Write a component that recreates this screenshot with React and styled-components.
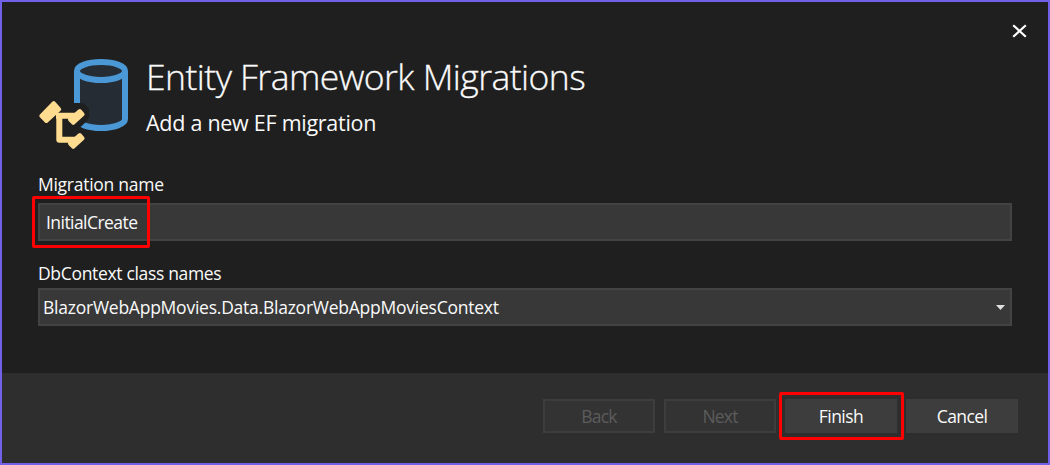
import React from "react";
import styled, { createGlobalStyle } from "styled-components";

const GlobalStyle = createGlobalStyle`
  * { box-sizing: border-box; }
  body { margin: 0; background: #1f1f1f; }
  button, input { font: inherit; }
`;

const Dialog = styled.div`
  position: relative;
  display: flex;
  flex-direction: column;
  width: 1050px;
  height: 465px;
  border: 2px solid #7160e8;
  background: #1f1f1f;
  color: #fafafa;
  font-family: "Segoe UI", "Open Sans", "Noto Sans", sans-serif;
  font-size: 17.5px;
  line-height: 24px;
  white-space: nowrap;
  overflow: hidden;
`;

const CloseButton = styled.button`
  position: absolute;
  top: 16px;
  right: 16px;
  width: 26px;
  height: 26px;
  padding: 0;
  border: 0;
  background: transparent;
  display: grid;
  place-items: center;
`;

const Header = styled.header`
  display: flex;
  gap: 14px;
  padding: 55px 36px 0;
`;

const HeaderIcon = styled.svg`
  width: 94px;
  height: 94px;
  flex: none;
`;

const Title = styled.h1`
  margin: -5px 0 0;
  font-size: 35.5px;
  line-height: 48px;
  font-weight: 300;
  letter-spacing: -0.54px;
  -webkit-text-stroke: 0.3px currentColor;
`;

const Subtitle = styled.p`
  margin: 8px 0 0;
  font-size: 21.5px;
  line-height: 30px;
  letter-spacing: -0.27px;
`;

const Form = styled.main`
  display: flex;
  flex-direction: column;
  gap: 20px;
  padding: 21px 36px 0;
  flex: 1;
`;

const Field = styled.div`
  display: flex;
  flex-direction: column;
  gap: ${(p) => p.$gap};
`;

const Label = styled.label`
  letter-spacing: ${(p) => p.$spacing || 0};
`;

const Control = styled.div`
  position: relative;
  display: flex;
  align-items: center;
  justify-content: space-between;
  height: 38px;
  padding: 0 ${(p) => p.$right || "6px"} 0 ${(p) => p.$left};
  border: 2px solid #434343;
  background: #383838;
`;

const Value = styled.span`
  letter-spacing: ${(p) => p.$spacing || 0};
`;

const Highlight = styled.span`
  position: absolute;
  top: ${(p) => p.$top};
  left: ${(p) => p.$left};
  width: ${(p) => p.$width};
  height: ${(p) => p.$height};
  border: 3px solid #ff0000;
  border-radius: 2px;
  pointer-events: none;
`;

const Footer = styled.footer`
  display: flex;
  justify-content: flex-end;
  align-items: flex-start;
  gap: 9px;
  height: 90px;
  padding: 26px 30px 0 0;
  background: #2e2e2e;
`;

const Button = styled.button`
  position: relative;
  width: 112px;
  height: 34px;
  padding: 0;
  border: 2px solid #3d3d3d;
  background: ${(p) => (p.disabled ? "#333333" : "#3d3d3d")};
  color: ${(p) => (p.disabled ? "#5c5c5c" : "#fafafa")};
  letter-spacing: ${(p) => p.$spacing || 0};
`;

export default function App() {
  return (
    <>
      <GlobalStyle />
      <Dialog role="dialog">
        <CloseButton aria-label="Close">
          <svg width="16" height="14" viewBox="0 0 16 14">
            <path d="M2.2 1.2L14.8 12.8M14.8 1.2L2.2 12.8" stroke="#fff" strokeWidth="2.2" />
          </svg>
        </CloseButton>
        <Header>
          <HeaderIcon viewBox="0 0 94 94">
            <path d="M39 14V62A24 9 0 0 0 87 62V14Z" fill="#252c33" />
            <path d="M39 14V62A24 9 0 0 0 87 62V14" fill="none" stroke="#4b98d6" strokeWidth="6" />
            <ellipse cx="63" cy="14" rx="24" ry="9" fill="#252c33" stroke="#4b98d6" strokeWidth="6" />
            <path d="M34 46H45L51 51.5L51.5 59L49 64L42.5 70L41 76H30Z" fill="#1f1f1f" />
            <path d="M18 58.8H38M21.3 58.8V82.8H38" fill="none" stroke="#ffdc90" strokeWidth="6" strokeLinejoin="round" />
            <g fill="#ffdc90" stroke="#ffdc90" strokeWidth="4" strokeLinejoin="round">
              <path d="M3.3 58.8L15.7 46.2L21.2 52.3L8.4 64Z" />
              <path d="M32 62.5L41.8 54L44.6 57.2L35.3 65.8Z" />
              <path d="M32 86.5L41.8 78L44.6 81.2L35.3 89.8Z" />
            </g>
          </HeaderIcon>
          <div>
            <Title>Entity Framework Migrations</Title>
            <Subtitle>Add a new EF migration</Subtitle>
          </div>
        </Header>
        <Form>
          <Field $gap="7px">
            <Label $spacing="-0.27px">Migration name</Label>
            <Control $left="6px">
              <Value $spacing="-0.55px">InitialCreate</Value>
              <Highlight $top="-9px" $left="-8px" $width="118px" $height="52px" />
            </Control>
          </Field>
          <Field $gap="3px">
            <Label $spacing="-0.33px">DbContext class names</Label>
            <Control $left="3px" $right="5px">
              <Value $spacing="-0.24px">BlazorWebAppMovies.Data.BlazorWebAppMoviesContext</Value>
              <svg width="9" height="5" viewBox="0 0 9 5">
                <path d="M0 0H9L4.5 5Z" fill="#e0e0e0" />
              </svg>
            </Control>
          </Field>
        </Form>
        <Footer>
          <Button disabled $spacing="-0.8px">Back</Button>
          <Button disabled $spacing="-0.8px">Next</Button>
          <Button $spacing="-0.55px">
            Finish
            <Highlight $top="-9px" $left="-8px" $width="125px" $height="48px" />
          </Button>
          <Button $spacing="-0.6px">Cancel</Button>
        </Footer>
      </Dialog>
    </>
  );
}
